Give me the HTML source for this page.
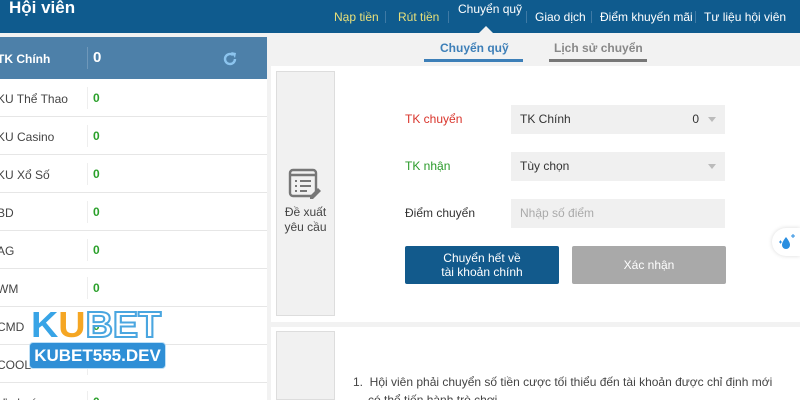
<!DOCTYPE html>
<html style="width:800px;height:400px;overflow:hidden"><head><meta charset="utf-8"><style>
*{margin:0;padding:0;box-sizing:border-box}
html,body{width:800px;height:400px;overflow:hidden}
body{background:#f2f2f2;font-family:"Liberation Sans",sans-serif}
#w{position:relative;width:800px;height:400px;overflow:hidden}
.hdr{position:absolute;left:0;top:0;width:800px;height:33px;background:#0f5b8e}
.hdr .t{position:absolute;left:9px;top:-2px;color:#fff;font-size:17px;font-weight:bold}
.nav{position:absolute;top:10px;font-size:12px;color:#fff}
.sep{position:absolute;top:11px;width:1px;height:12px;background:#3f7aa5}
.left{position:absolute;left:0;top:37px;width:267px;height:363px;background:#fff;overflow:hidden}
.row{height:38px;border-bottom:1px solid #e6e6e6;position:relative;font-size:12px;color:#444}
.row .n{position:absolute;left:-3px;top:13px}
.row .v{position:absolute;left:87px;top:8px;border-left:1px solid #eee;padding-left:5px;height:22px;line-height:22px;color:#2aa02a;font-weight:bold}
.row.first{background:#4d80a9;height:42px;color:#fff;font-weight:bold;border:0}
.row.first .n{top:15px}
.row.first .v{color:#fff;font-size:15px;top:10px;border-color:#6f98ba}
.card{position:absolute;background:#fff;left:271px;width:529px;overflow:hidden}
.box{position:absolute;left:5px;width:59px;background:#f1f1f1;border:1px solid #ddd}
.lbl{position:absolute;left:405px;font-size:12px}
.inp{position:absolute;left:511px;width:214px;height:29px;background:#f0f0f0;font-size:12px;line-height:29px;padding-left:9px;color:#333}
.arr{position:absolute;right:9px;top:12px;border:4px solid transparent;border-top:5px solid #bbb;border-bottom:0}
.btn{position:absolute;top:246px;width:154px;height:38px;border-radius:2px;color:#fff;font-size:12px;text-align:center}
</style></head><body><div id="w">
<div class="hdr"><div class="t">Hội viên</div>
<div class="nav" style="left:334px;color:#e8e07a">Nạp tiền</div>
<div class="sep" style="left:385px"></div>
<div class="nav" style="left:398px;color:#e8e07a">Rút tiền</div>
<div class="sep" style="left:448px"></div>
<div class="nav" style="left:458px;top:2px">Chuyển quỹ</div>
<div style="position:absolute;left:479px;top:26px;border:7px solid transparent;border-bottom:7px solid #f2f2f2;border-top:0"></div>
<div class="sep" style="left:526px"></div>
<div class="nav" style="left:535px">Giao dịch</div>
<div class="sep" style="left:591px"></div>
<div class="nav" style="left:600px">Điểm khuyến mãi</div>
<div class="sep" style="left:695px"></div>
<div class="nav" style="left:704px">Tư liệu hội viên</div>
</div>
<div style="position:absolute;left:440px;top:41px;font-size:12px;font-weight:bold;color:#3d7fb8">Chuyển quỹ</div>
<div style="position:absolute;left:424px;top:59px;width:99px;height:3px;background:#3d7fb8"></div>
<div style="position:absolute;left:554px;top:41px;font-size:12px;font-weight:bold;color:#888">Lịch sử chuyển</div>
<div style="position:absolute;left:549px;top:59px;width:98px;height:3px;background:#777"></div>
<div class="left">
<div class="row first"><span class="n">TK Chính</span><span class="v">0</span>
<svg style="position:absolute;left:221px;top:13px" width="18" height="18" viewBox="0 0 18 18"><path d="M14 9a5 5 0 1 1-2-4" fill="none" stroke="#8cc4ee" stroke-width="2.4"/><path d="M10 2l5 1-1 5z" fill="#8cc4ee"/></svg></div>
<div class="row"><span class="n">KU Thể Thao</span><span class="v">0</span></div>
<div class="row"><span class="n">KU Casino</span><span class="v">0</span></div>
<div class="row"><span class="n">KU Xổ Số</span><span class="v">0</span></div>
<div class="row"><span class="n">BD</span><span class="v">0</span></div>
<div class="row"><span class="n">AG</span><span class="v">0</span></div>
<div class="row"><span class="n">WM</span><span class="v">0</span></div>
<div class="row"><span class="n">CMD</span><span class="v">0</span></div>
<div class="row"><span class="n">COOL</span><span class="v"></span></div>
<div class="row"><span class="n">Ưu hoá</span><span class="v">0</span></div>
</div>
<div style="position:absolute;left:31px;top:308px;font-size:36px;font-weight:900;line-height:34px;transform:scaleX(1.05);transform-origin:left"><span style="color:#38a4e6">K</span><span style="color:#f5a623">U</span><span style="color:#fff;-webkit-text-stroke:2px #4aa6e0">BET</span></div>
<div style="position:absolute;left:29px;top:342px;width:137px;height:27px;background:#2f8fd6;border:1px solid #bfe0f6;border-radius:4px;color:#fff;font-weight:900;font-size:17px;line-height:25px;text-align:center">KUBET555.DEV</div>
<div class="card" style="top:66px;height:256px">
<div class="box" style="top:5px;height:245px"></div></div>
<svg style="position:absolute;left:288px;top:168px" width="34" height="32" viewBox="0 0 34 32"><rect x="2" y="2" width="26" height="26" rx="3" fill="none" stroke="#777" stroke-width="2.4"/><path d="M2 7h26" stroke="#777" stroke-width="2.4"/><path d="M7 13h2M12 13h11M7 18h2M12 18h11M7 23h2M12 23h7" stroke="#777" stroke-width="2"/><path d="M22 28l8-8 3 3-8 8h-3z" fill="#777"/></svg>
<div style="position:absolute;left:276px;top:205px;width:59px;text-align:center;font-size:12px;color:#444;line-height:15px">Đề xuất<br>yêu cầu</div>
<div class="lbl" style="top:112px;color:#d9342b">TK chuyển</div>
<div class="inp" style="top:105px">TK Chính<span style="position:absolute;right:26px">0</span><i class="arr"></i></div>
<div class="lbl" style="top:159px;color:#2a9a2a">TK nhận</div>
<div class="inp" style="top:152px">Tùy chọn<i class="arr"></i></div>
<div class="lbl" style="top:206px;color:#333">Điểm chuyển</div>
<div class="inp" style="top:199px;color:#aaa">Nhập số điểm</div>
<div class="btn" style="left:405px;background:#125a8c;padding-top:5px;line-height:14px">Chuyển hết về<br>tài khoản chính</div>
<div class="btn" style="left:572px;background:#a9a9a9;line-height:38px">Xác nhận</div>
<div style="position:absolute;left:772px;top:228px;width:28px;height:28px;background:#fff;border-radius:14px 0 0 14px;box-shadow:0 0 4px rgba(0,0,0,.15)"><svg style="position:absolute;left:5px;top:5px" width="20" height="18" viewBox="0 0 20 18"><path d="M9 4c3 4 4 6 4 8a4 4 0 0 1-8 0c0-2 1-4 4-8z" fill="#2a8ee0"/><path d="M16 1v4M14 3h4M2 9h3M3.5 7.5v3" stroke="#2a8ee0" stroke-width="1"/></svg></div>
<div class="card" style="top:327px;height:73px">
<div class="box" style="top:4px;height:69px"></div>
<div style="position:absolute;left:82px;top:46px;font-size:12px;color:#444;line-height:18px;width:440px;white-space:nowrap">1.&nbsp; Hội viên phải chuyển số tiền cược tối thiểu đến tài khoản được chỉ định mới<br><span style="padding-left:15px">có thể tiến hành trò chơi</span></div>
</div>
</div></body></html>
